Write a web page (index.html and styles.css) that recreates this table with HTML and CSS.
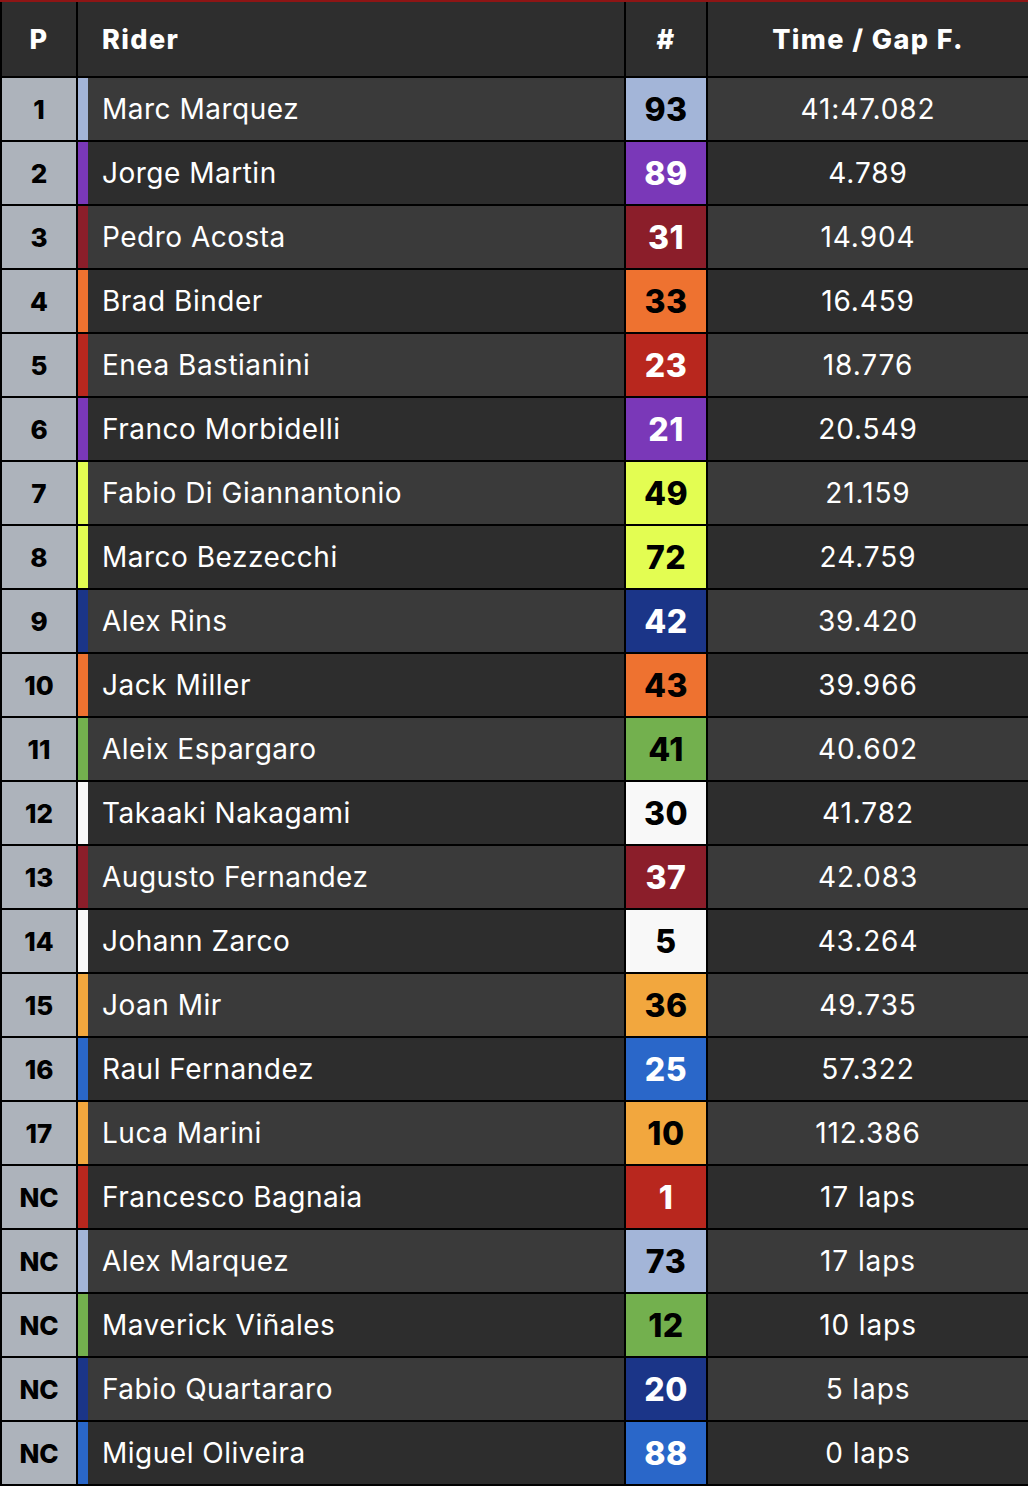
FILE: index.html
```html
<!DOCTYPE html>
<html lang="en">
<head>
<meta charset="utf-8">
<title>Race Results</title>
<link rel="stylesheet" href="styles.css">
</head>
<body>
<div class="board">
  <div class="row head">
    <div class="c pos">P</div>
    <div class="c rider">Rider</div>
    <div class="c num">#</div>
    <div class="c time">Time / Gap F.</div>
  </div>
  <div class="row odd"><div class="c pos">1</div><div class="c rider t-lblue">Marc Marquez</div><div class="c num t-lblue">93</div><div class="c time">41:47.082</div></div>
  <div class="row even"><div class="c pos">2</div><div class="c rider t-purple">Jorge Martin</div><div class="c num t-purple">89</div><div class="c time">4.789</div></div>
  <div class="row odd"><div class="c pos">3</div><div class="c rider t-maroon">Pedro Acosta</div><div class="c num t-maroon">31</div><div class="c time">14.904</div></div>
  <div class="row even"><div class="c pos">4</div><div class="c rider t-orange">Brad Binder</div><div class="c num t-orange">33</div><div class="c time">16.459</div></div>
  <div class="row odd"><div class="c pos">5</div><div class="c rider t-red">Enea Bastianini</div><div class="c num t-red">23</div><div class="c time">18.776</div></div>
  <div class="row even"><div class="c pos">6</div><div class="c rider t-purple">Franco Morbidelli</div><div class="c num t-purple">21</div><div class="c time">20.549</div></div>
  <div class="row odd"><div class="c pos">7</div><div class="c rider t-lime">Fabio Di Giannantonio</div><div class="c num t-lime">49</div><div class="c time">21.159</div></div>
  <div class="row even"><div class="c pos">8</div><div class="c rider t-lime">Marco Bezzecchi</div><div class="c num t-lime">72</div><div class="c time">24.759</div></div>
  <div class="row odd"><div class="c pos">9</div><div class="c rider t-navy">Alex Rins</div><div class="c num t-navy">42</div><div class="c time">39.420</div></div>
  <div class="row even"><div class="c pos">10</div><div class="c rider t-orange">Jack Miller</div><div class="c num t-orange">43</div><div class="c time">39.966</div></div>
  <div class="row odd"><div class="c pos">11</div><div class="c rider t-green">Aleix Espargaro</div><div class="c num t-green">41</div><div class="c time">40.602</div></div>
  <div class="row even"><div class="c pos">12</div><div class="c rider t-white">Takaaki Nakagami</div><div class="c num t-white">30</div><div class="c time">41.782</div></div>
  <div class="row odd"><div class="c pos">13</div><div class="c rider t-maroon">Augusto Fernandez</div><div class="c num t-maroon">37</div><div class="c time">42.083</div></div>
  <div class="row even"><div class="c pos">14</div><div class="c rider t-white">Johann Zarco</div><div class="c num t-white">5</div><div class="c time">43.264</div></div>
  <div class="row odd"><div class="c pos">15</div><div class="c rider t-amber">Joan Mir</div><div class="c num t-amber">36</div><div class="c time">49.735</div></div>
  <div class="row even"><div class="c pos">16</div><div class="c rider t-blue">Raul Fernandez</div><div class="c num t-blue">25</div><div class="c time">57.322</div></div>
  <div class="row odd"><div class="c pos">17</div><div class="c rider t-amber">Luca Marini</div><div class="c num t-amber">10</div><div class="c time">112.386</div></div>
  <div class="row even"><div class="c pos">NC</div><div class="c rider t-red">Francesco Bagnaia</div><div class="c num t-red">1</div><div class="c time">17 laps</div></div>
  <div class="row odd"><div class="c pos">NC</div><div class="c rider t-lblue">Alex Marquez</div><div class="c num t-lblue">73</div><div class="c time">17 laps</div></div>
  <div class="row even"><div class="c pos">NC</div><div class="c rider t-green">Maverick Viñales</div><div class="c num t-green">12</div><div class="c time">10 laps</div></div>
  <div class="row odd"><div class="c pos">NC</div><div class="c rider t-navy">Fabio Quartararo</div><div class="c num t-navy">20</div><div class="c time">5 laps</div></div>
  <div class="row even"><div class="c pos">NC</div><div class="c rider t-blue">Miguel Oliveira</div><div class="c num t-blue">88</div><div class="c time">0 laps</div></div>
</div>
</body>
</html>
```

FILE: styles.css
```css
html, body {
  margin: 0;
  padding: 0;
  background: #000;
}

.board {
  width: 1028px;
  box-sizing: border-box;
  border-top: 2px solid #8e1515;
  background: #000;
  padding: 0 0 2px 2px;
  display: flex;
  flex-direction: column;
  gap: 2px;
  overflow: hidden;
}

.row {
  display: grid;
  grid-template-columns: 74px 546px 80px 320px;
  column-gap: 2px;
  height: 62px;
}

.row.head {
  height: 74px;
}

.c {
  display: flex;
  align-items: center;
  justify-content: center;
  color: #fff;
  font-family: Inter, "Noto Sans", sans-serif;
  font-size: 28px;
  letter-spacing: 0.5px;
  white-space: nowrap;
}

.head .c {
  background: #2e2e2e;
  font-weight: 800;
  font-size: 27px;
  letter-spacing: 1.4px;
  color: #fff;
}

.head .rider {
  justify-content: flex-start;
  padding-left: 24px;
  border-left: none;
}

.odd .rider, .odd .time { background: #3a3a3a; }
.even .rider, .even .time { background: #2d2d2d; }

.pos {
  background: #adb3bb;
  color: #000;
  font-weight: 800;
  font-size: 26px;
  letter-spacing: 0;
}

.rider {
  justify-content: flex-start;
  padding-left: 14px;
  border-left: 10px solid transparent;
  box-sizing: border-box;
}

.num {
  font-weight: 800;
  font-size: 32px;
  letter-spacing: 0.5px;
  color: #000;
}

.time {
  font-size: 28px;
  letter-spacing: 0.9px;
}

.t-lblue { border-left-color: #a3b5d8; }
.num.t-lblue { background: #a3b5d8; color: #000; }
.t-purple { border-left-color: #7a38b8; }
.num.t-purple { background: #7a38b8; color: #fff; }
.t-maroon { border-left-color: #8b1e2a; }
.num.t-maroon { background: #8b1e2a; color: #fff; }
.t-orange { border-left-color: #ee7230; }
.num.t-orange { background: #ee7230; color: #000; }
.t-red { border-left-color: #b8271e; }
.num.t-red { background: #b8271e; color: #fff; }
.t-lime { border-left-color: #e3fd52; }
.num.t-lime { background: #e3fd52; color: #000; }
.t-navy { border-left-color: #1b3588; }
.num.t-navy { background: #1b3588; color: #fff; }
.t-green { border-left-color: #73b04e; }
.num.t-green { background: #73b04e; color: #000; }
.t-white { border-left-color: #f8f8f8; }
.num.t-white { background: #f8f8f8; color: #000; }
.t-amber { border-left-color: #f2a73e; }
.num.t-amber { background: #f2a73e; color: #000; }
.t-blue { border-left-color: #2a67c9; }
.num.t-blue { background: #2a67c9; color: #fff; }
```
